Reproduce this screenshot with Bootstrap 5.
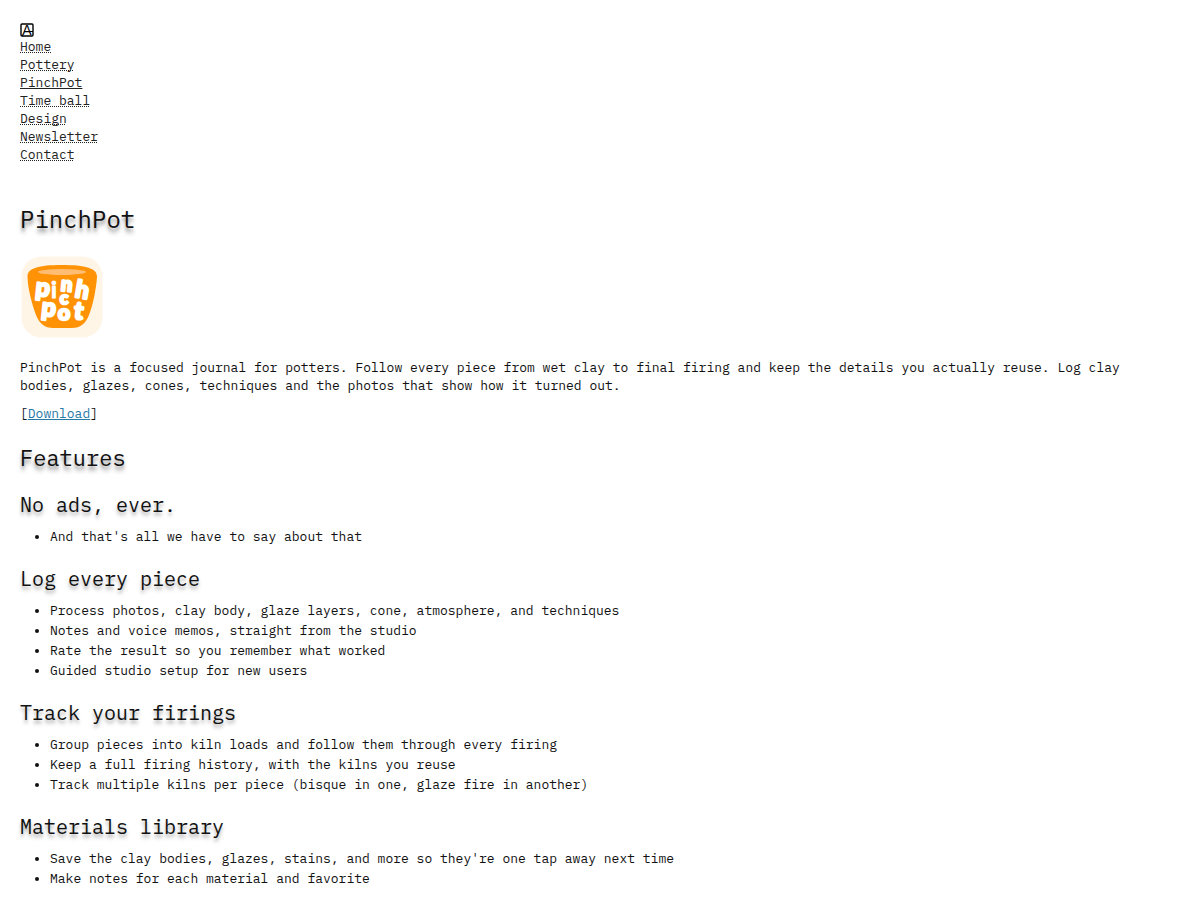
<!DOCTYPE html>
<html lang="en">
<head>
<meta charset="utf-8">
<meta name="viewport" content="width=device-width, initial-scale=1">
<title>PinchPot</title>
<link href="https://cdn.jsdelivr.net/npm/bootstrap@5.3.0/dist/css/bootstrap.min.css" rel="stylesheet">
<style>
  body { font: 13px/18px "IBM Plex Mono", "Liberation Mono", monospace; color: #111; background: #fff; padding: 20px; }
  h1, h2, h3 { font-weight: 400; text-shadow: 0 3px 3px rgba(0, 0, 0, .2), 0 5px 4px rgba(0, 0, 0, .3); }
  h1 { font-size: 24px; line-height: 28px; margin: 41px 0 23px; }
  h2 { font-size: 22px; line-height: 26px; margin: 22px 0 22px; }
  h3 { font-size: 20px; line-height: 24px; margin: 0 0 10px; text-shadow: 0 3px 3px rgba(0, 0, 0, .15), 0 4px 4px rgba(0, 0, 0, .2); }
  .site-mark { margin: 3px 0 1px; overflow: visible; }
  .pot-logo { margin-bottom: 20px; }
  .site-link { color: #222; text-decoration: underline dotted 1px; text-underline-offset: 1px; text-decoration-skip-ink: none; }
  .site-link.active { text-decoration-style: solid; }
  .download { color: #2779a7; text-decoration-skip-ink: none; }
  .features ul { font-size: 13px; line-height: 20px; padding-left: 30px; margin: 0 0 20px; }
  p { margin: 0 0 10px; }
</style>
</head>
<body>
<header>
  <nav aria-label="Main">
    <a class="d-block text-black" href="#" aria-label="Studio home"><svg class="d-block site-mark" width="14" height="14" viewBox="0 0 14 14"><rect x="1" y="1" width="12" height="12" rx="1" fill="none" stroke="#000" stroke-width="1.4"/><text x="7" y="12" text-anchor="middle" font-family="Liberation Sans, sans-serif" font-size="14">A</text><path d="M8 8.500h5M3 12L2 13" stroke="#000" stroke-width="1.2"/></svg></a>
    <ul class="list-unstyled mb-0">
      <li><a class="site-link" href="#">Home</a></li>
      <li><a class="site-link" href="#">Pottery</a></li>
      <li><a class="site-link active" aria-current="page" href="#">PinchPot</a></li>
      <li><a class="site-link" href="#">Time ball</a></li>
      <li><a class="site-link" href="#">Design</a></li>
      <li><a class="site-link" href="#">Newsletter</a></li>
      <li><a class="site-link" href="#">Contact</a></li>
    </ul>
  </nav>
</header>
<main>
  <h1>PinchPot</h1>
  <svg class="d-block pot-logo" width="83" height="83" viewBox="5 6 83 83" aria-label="PinchPot logo" role="img">
    <rect x="6.5" y="6.5" width="81" height="81" rx="20" fill="#fff5e7"/>
    <path d="M12.500 27C12 18 24 15 47 15S82.500 18 82 27C81 40 78 55 74 65Q69 78 57 78H38Q26 78 21 65C17 54 13 40 12.500 27Z" fill="#ff9205"/>
    <ellipse cx="47" cy="22" rx="24" ry="3" fill="#ffbd73"/>
    <g fill="#fff" stroke="#fff" stroke-width="2.6" stroke-linejoin="round" stroke-linecap="round" font-family="Lato, sans-serif" font-weight="700" text-anchor="middle">
      <text x="27" y="46" font-size="25" transform="rotate(6 27 46)">p</text>
      <text x="39" y="48" font-size="23" stroke-width="1">i</text>
      <text x="51" y="41" font-size="20" transform="rotate(6 51 41)">n</text>
      <text x="66" y="48" font-size="24" transform="rotate(10 66 48)">h</text>
      <text x="49" y="54" font-size="17">c</text>
      <text x="33" y="66" font-size="25" transform="rotate(6 33 66)">p</text>
      <text x="49" y="70" font-size="21">o</text>
      <text x="63" y="69" font-size="24" transform="rotate(6 63 69)">t</text>
    </g>
  </svg>
  <p>PinchPot is a focused journal for potters. Follow every piece from wet clay to final firing and keep the details you actually reuse. Log clay bodies, glazes, cones, techniques and the photos that show how it turned out.</p>
  <p>[<a class="download" href="#">Download</a>]</p>
  <section class="features">
    <h2>Features</h2>
    <h3>No ads, ever.</h3>
    <ul><li>And that's all we have to say about that</li></ul>
    <h3>Log every piece</h3>
    <ul>
      <li>Process photos, clay body, glaze layers, cone, atmosphere, and techniques</li>
      <li>Notes and voice memos, straight from the studio</li>
      <li>Rate the result so you remember what worked</li>
      <li>Guided studio setup for new users</li>
    </ul>
    <h3>Track your firings</h3>
    <ul>
      <li>Group pieces into kiln loads and follow them through every firing</li>
      <li>Keep a full firing history, with the kilns you reuse</li>
      <li>Track multiple kilns per piece (bisque in one, glaze fire in another)</li>
    </ul>
    <h3>Materials library</h3>
    <ul class="mb-0">
      <li>Save the clay bodies, glazes, stains, and more so they're one tap away next time</li>
      <li>Make notes for each material and favorite</li>
    </ul>
  </section>
</main>
<script src="https://cdn.jsdelivr.net/npm/bootstrap@5.3.0/dist/js/bootstrap.bundle.min.js"></script>
</body>
</html>
